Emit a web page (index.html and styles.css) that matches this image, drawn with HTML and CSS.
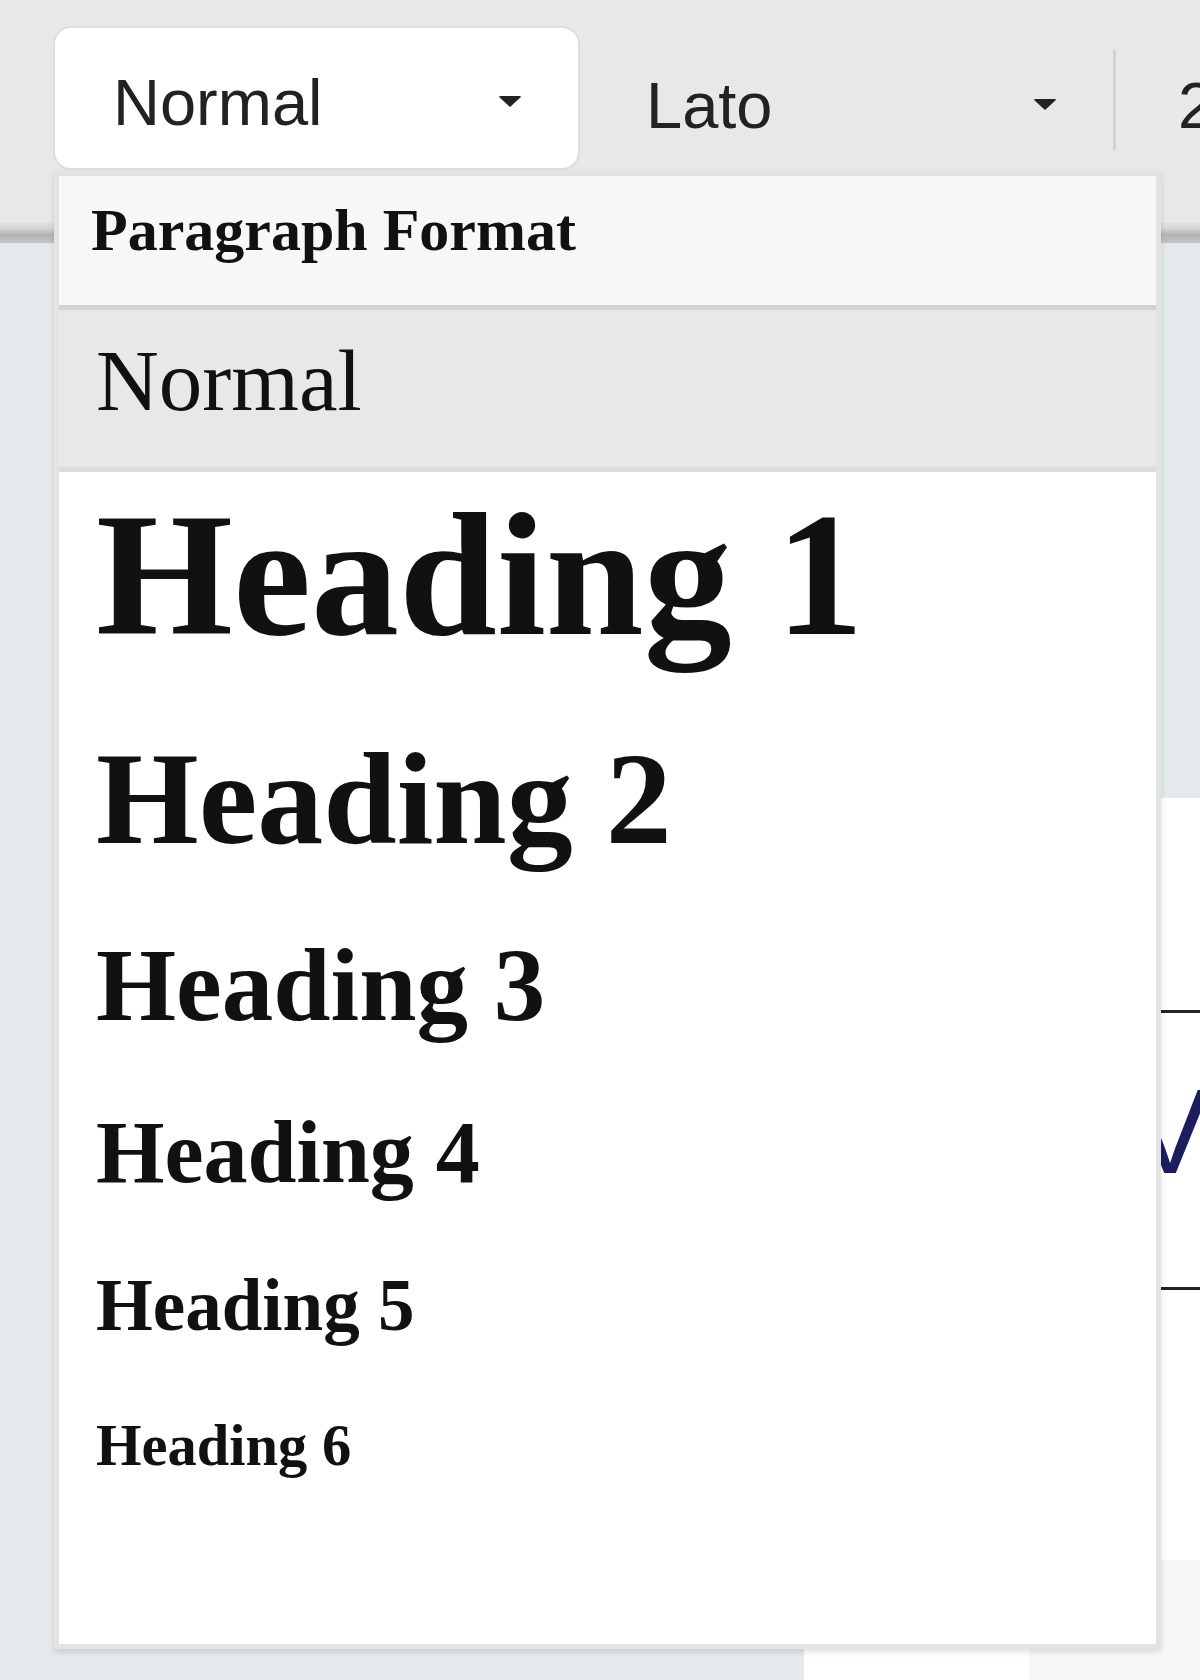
FILE: index.html
```html
<!DOCTYPE html>
<html lang="en">
<head>
	<meta charset="UTF-8">
	<title>Paragraph Format</title>
	<link rel="stylesheet" href="styles.css">
</head>
<body>
	<div class="toolbar">
		<div class="combo combo-format open">
			<span class="combo-text">Normal</span>
			<span class="combo-arrow"></span>
		</div>
		<div class="combo combo-font">
			<span class="combo-text">Lato</span>
			<span class="combo-arrow"></span>
		</div>
		<span class="separator"></span>
		<div class="combo combo-size">
			<span class="combo-text">20</span>
		</div>
	</div>
	<div class="toolbar-edge"></div>

	<div class="workspace">
		<div class="page">
			<div class="doc-row">
				<span class="doc-text">V</span>
			</div>
			<div class="doc-cells">
				<div class="cell"></div>
				<div class="cell cell-gray"></div>
			</div>
		</div>
	</div>

	<div class="format-panel">
		<div class="panel-title">Paragraph Format</div>
		<ul class="format-list">
			<li class="format-item current"><p>Normal</p></li>
			<li class="format-item"><h1>Heading 1</h1></li>
			<li class="format-item"><h2>Heading 2</h2></li>
			<li class="format-item"><h3>Heading 3</h3></li>
			<li class="format-item"><h4>Heading 4</h4></li>
			<li class="format-item"><h5>Heading 5</h5></li>
			<li class="format-item"><h6>Heading 6</h6></li>
		</ul>
	</div>
</body>
</html>
```

FILE: styles.css
```css
*{margin:0;padding:0;box-sizing:border-box;}
ul{list-style:none;}
html,body{height:100%;}
body{background:#e4e9ec;overflow:hidden;font-family:"Liberation Sans",Arial,sans-serif;color:#222;}

/* toolbar */
.toolbar{height:222px;background:#e8e8e8;display:flex;align-items:flex-start;padding:28px 0 0 55px;white-space:nowrap;}
.toolbar-edge{height:21px;background:linear-gradient(#e2e2e2 0,#d6d6d6 30%,#b4b4b4 60%,#c4c4c4 100%);}
.combo{height:140px;display:flex;align-items:center;justify-content:space-between;flex:none;}
.combo-text{font-size:65px;line-height:75px;color:#222;}
.combo-arrow{width:0;height:0;border-top:11px solid #222;border-left:12px solid transparent;border-right:12px solid transparent;border-radius:3px;margin-top:-2px;}
.combo-format{width:523px;padding:9px 56px 0 58px;background:#fff;border-radius:16px;box-shadow:0 0 0 2px #dedede;}
.combo-font{width:535px;padding:15px 56px 0 68px;}
.combo-size{padding:15px 0 0 62px;}
.separator{width:3px;height:100px;margin-top:22px;background:#d2d2d2;flex:none;}

/* document behind the panel */
.workspace{padding:555px 0 0 804px;}
.page{background:#fff;height:900px;padding-top:212px;}
.doc-row{height:280px;border-top:3px solid #222;border-bottom:3px solid #222;padding:58px 0 0 326px;}
.doc-text{font-size:120px;line-height:120px;color:#1b1d5c;font-family:"Liberation Sans",Arial,sans-serif;}
.doc-cells{display:flex;margin-top:270px;height:200px;}
.cell{width:225px;}
.cell-gray{flex:1;background:#f7f7f7;}

/* format dropdown */
.format-panel{position:absolute;left:54px;top:171px;width:1107px;height:1478px;background:#fff;border:5px solid #e3e3e3;box-shadow:0 3px 6px rgba(0,0,0,.12);font-family:"Liberation Serif","Times New Roman",serif;color:#111;}
.panel-title{background:#f7f7f7;font-size:60px;line-height:69px;font-weight:bold;padding:20px 31px 40px 32px;border-bottom:5px solid #d2d2d2;}
.format-item{padding:0 31px 0 37px;}
.format-item.current{background:#e8e8e8;height:162px;padding-top:21px;border-bottom:5px solid #dcdcdc;}
.format-item p{font-size:87px;line-height:100px;}
.format-item h1{font-size:176px;line-height:202px;margin-top:2px;}
.format-item h2{font-size:132px;line-height:152px;margin-top:47px;}
.format-item h3{font-size:103px;line-height:118px;margin-top:51px;}
.format-item h4{font-size:88px;line-height:101px;margin-top:58px;}
.format-item h5{font-size:73px;line-height:84px;margin-top:61px;}
.format-item h6{font-size:58.5px;line-height:67px;margin-top:64px;}
```
